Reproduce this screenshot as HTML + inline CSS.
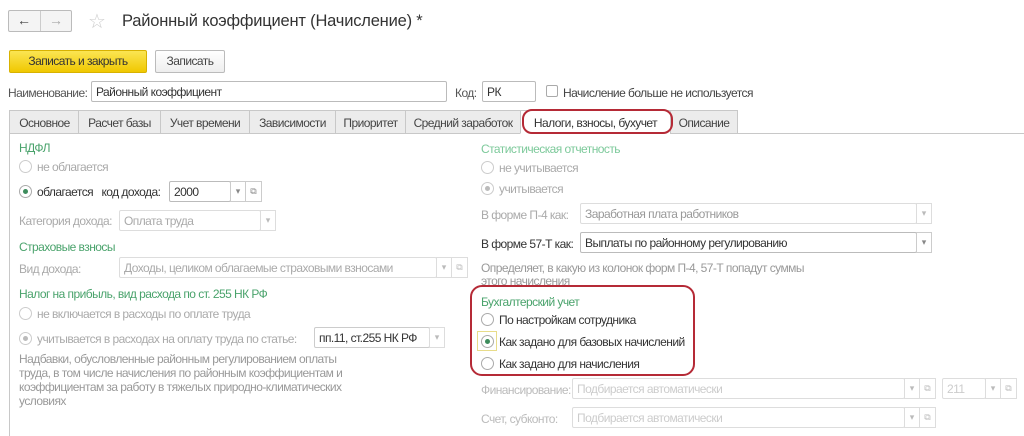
<!DOCTYPE html>
<html><head><meta charset="utf-8"><style>
*{margin:0;padding:0;box-sizing:border-box}
body{width:1024px;height:436px;background:#fff;font-family:"Liberation Sans",sans-serif;font-size:12px;letter-spacing:-0.55px;color:#444;position:relative;overflow:hidden}
.a{position:absolute;white-space:nowrap}
.g{color:#aaa}
.gr{color:#4aa36c}
.dk{color:#333}
.in{position:absolute;border:1px solid #bbb;border-radius:2px;background:#fff;height:21px;padding:3px 4px;white-space:nowrap;color:#333;overflow:hidden}
.in.d{border-color:#ddd;color:#aaa}
.btn{position:absolute;border:1px solid #ccc;border-left:none;height:21px;width:16px;text-align:center;color:#888;font-size:9px;line-height:19px;background:#fff;letter-spacing:0}
.btn.d{border-color:#ddd;color:#bbb}
.rd{position:absolute;width:13px;height:13px;border:1px solid #aaa;border-radius:50%;background:#fff}
.rd.d{border-color:#ccc}
.rd.on::after{content:"";position:absolute;left:3px;top:3px;width:5px;height:5px;border-radius:50%;background:#3d8c5c}
.rd.on.d::after{background:#bbb}
.tab{position:absolute;top:110px;height:24px;border:1px solid #c8c8c8;border-right:none;background:#ececec;padding:5px 0;text-align:center;color:#444;white-space:nowrap}
</style></head><body>
<div class="a" style="left:8px;top:10px;width:64px;height:22px;border:1px solid #bbb;border-radius:2px;background:#f4f4f4"></div>
<div class="a" style="left:40px;top:11px;width:1px;height:20px;background:#ccc"></div>
<div class="a" style="left:17px;top:12px;font-size:14px;color:#444">&#8592;</div>
<div class="a" style="left:49px;top:12px;font-size:14px;color:#aaa">&#8594;</div>
<div class="a" style="left:88px;top:9px;font-size:20px;color:#ccc">&#9734;</div>
<div class="a" style="left:122px;top:12px;font-size:16.5px;color:#333;letter-spacing:-0.2px">Районный коэффициент (Начисление) *</div>
<div class="a" style="left:9px;top:50px;width:138px;height:23px;background:linear-gradient(#fbe553,#f0c800);border:1px solid #d8b200;border-radius:2px;text-align:center;line-height:21px;color:#333">Записать и закрыть</div>
<div class="a" style="left:155px;top:50px;width:70px;height:23px;background:linear-gradient(#fff,#eee);border:1px solid #bbb;border-radius:2px;text-align:center;line-height:21px;color:#444">Записать</div>
<div class="a" style="left:8px;top:86px;color:#555">Наименование:</div>
<div class="in" style="left:91px;top:81px;width:356px">Районный коэффициент</div>
<div class="a" style="left:455px;top:86px;color:#555">Код:</div>
<div class="in" style="left:482px;top:81px;width:54px">РК</div>
<div class="a" style="left:546px;top:85px;width:12px;height:12px;border:1px solid #aaa;border-radius:2px"></div>
<div class="a" style="left:563px;top:86px;color:#444">Начисление больше не используется</div>
<div class="tab" style="left:9px;width:70px">Основное</div>
<div class="tab" style="left:78px;width:82px">Расчет базы</div>
<div class="tab" style="left:160px;width:89px">Учет времени</div>
<div class="tab" style="left:249px;width:86px">Зависимости</div>
<div class="tab" style="left:335px;width:70px">Приоритет</div>
<div class="tab" style="left:405px;width:115px">Средний заработок</div>
<div class="tab" style="left:520px;width:150px;background:#fff;border-bottom-color:#fff;color:#333">Налоги, взносы, бухучет</div>
<div class="tab" style="left:670px;width:68px;border-right:1px solid #c8c8c8">Описание</div>
<div class="a" style="left:738px;top:133px;width:286px;height:1px;background:#c8c8c8"></div>
<div class="a" style="left:9px;top:133px;width:1px;height:303px;background:#c8c8c8"></div>
<div class="a" style="left:522px;top:109px;width:151px;height:25px;border:2px solid #b52a36;border-radius:10px"></div>
<div class="a gr" style="left:19px;top:141px">НДФЛ</div>
<div class="rd d" style="left:19px;top:160px"></div><div class="a g" style="left:37px;top:160px">не облагается</div>
<div class="rd on" style="left:19px;top:185px"></div><div class="a dk" style="left:37px;top:185px">облагается&nbsp;&nbsp;&nbsp;код дохода:</div>
<div class="in" style="left:169px;top:181px;width:62px">2000</div><div class="btn" style="left:230px;top:181px;border-left:1px solid #ccc">&#9662;</div><div class="btn" style="left:246px;top:181px">&#10697;</div>
<div class="a g" style="left:19px;top:214px">Категория дохода:</div>
<div class="in d" style="left:119px;top:210px;width:142px">Оплата труда</div><div class="btn d" style="left:260px;top:210px;border-left:1px solid #ddd">&#9662;</div>
<div class="a gr" style="left:19px;top:240px">Страховые взносы</div>
<div class="a g" style="left:19px;top:262px">Вид дохода:</div>
<div class="in d" style="left:119px;top:257px;width:318px">Доходы, целиком облагаемые страховыми взносами</div><div class="btn d" style="left:436px;top:257px;border-left:1px solid #ddd">&#9662;</div><div class="btn d" style="left:452px;top:257px">&#10697;</div>
<div class="a gr" style="left:19px;top:287px">Налог на прибыль, вид расхода по ст. 255 НК РФ</div>
<div class="rd d" style="left:19px;top:307px"></div><div class="a g" style="left:37px;top:307px">не включается в расходы по оплате труда</div>
<div class="rd on d" style="left:19px;top:332px"></div><div class="a g" style="left:37px;top:332px">учитывается в расходах на оплату труда по статье:</div>
<div class="in" style="left:314px;top:327px;width:116px;border-color:#ccc">пп.11, ст.255 НК РФ</div><div class="btn d" style="left:429px;top:327px;border-left:1px solid #ddd">&#9662;</div>
<div class="a" style="left:19px;top:352px;color:#999;line-height:14px;white-space:normal;width:335px">Надбавки, обусловленные районным регулированием оплаты труда, в том числе начисления по районным коэффициентам и коэффициентам за работу в тяжелых природно-климатических условиях</div>
<div class="a" style="left:481px;top:142px;color:#7cc99a">Статистическая отчетность</div>
<div class="rd d" style="left:481px;top:161px"></div><div class="a g" style="left:499px;top:161px">не учитывается</div>
<div class="rd on d" style="left:481px;top:182px"></div><div class="a g" style="left:499px;top:182px">учитывается</div>
<div class="a g" style="left:481px;top:208px">В форме П-4 как:</div>
<div class="in d" style="left:580px;top:203px;width:337px;color:#999">Заработная плата работников</div><div class="btn d" style="left:916px;top:203px;border-left:1px solid #ddd">&#9662;</div>
<div class="a dk" style="left:481px;top:237px">В форме 57-Т как:</div>
<div class="in" style="left:580px;top:232px;width:337px">Выплаты по районному регулированию</div><div class="btn" style="left:916px;top:232px;border-left:1px solid #ccc">&#9662;</div>
<div class="a" style="left:481px;top:262px;color:#999;line-height:13px">Определяет, в какую из колонок форм П-4, 57-Т попадут суммы<br>этого начисления</div>
<div class="a" style="left:470px;top:285px;width:225px;height:91px;border:2px solid #b52a36;border-radius:12px;background:transparent"></div>
<div class="a gr" style="left:481px;top:295px">Бухгалтерский учет</div>
<div class="rd" style="left:481px;top:313px"></div><div class="a dk" style="left:499px;top:313px">По настройкам сотрудника</div>
<div class="a" style="left:477px;top:331px;width:20px;height:20px;border:1px solid #e8dc8a"></div>
<div class="rd on" style="left:481px;top:335px"></div><div class="a dk" style="left:499px;top:335px">Как задано для базовых начислений</div>
<div class="rd" style="left:481px;top:357px"></div><div class="a dk" style="left:499px;top:357px">Как задано для начисления</div>
<div class="a" style="left:481px;top:383px;color:#bbb">Финансирование:</div>
<div class="in d" style="left:572px;top:378px;width:333px;color:#ccc">Подбирается автоматически</div><div class="btn d" style="left:904px;top:378px;border-left:1px solid #ddd">&#9662;</div><div class="btn d" style="left:920px;top:378px">&#10697;</div>
<div class="in d" style="left:942px;top:378px;width:44px;color:#ccc">211</div><div class="btn d" style="left:985px;top:378px;border-left:1px solid #ddd">&#9662;</div><div class="btn d" style="left:1001px;top:378px">&#10697;</div>
<div class="a" style="left:481px;top:412px;color:#bbb">Счет, субконто:</div>
<div class="in d" style="left:572px;top:407px;width:333px;color:#ccc">Подбирается автоматически</div><div class="btn d" style="left:904px;top:407px;border-left:1px solid #ddd">&#9662;</div><div class="btn d" style="left:920px;top:407px">&#10697;</div>
</body></html>
